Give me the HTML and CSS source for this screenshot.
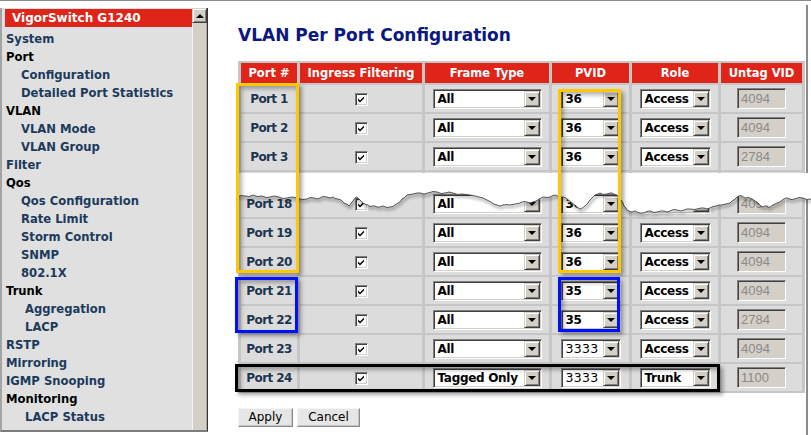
FILE: index.html
```html
<!DOCTYPE html>
<html>
<head>
<meta charset="utf-8">
<title>VLAN Per Port Configuration</title>
<link rel="stylesheet" href="styles.css">
</head>
<body>
<div class="page">
  <div class="topline"></div>
  <div class="layout">
    <aside class="sidebar">
      <div class="menu">
        <div class="brand">VigorSwitch G1240</div>
        <ul class="nav">
          <li>System</li>
          <li class="cat">Port</li>
          <li class="sub">Configuration</li>
          <li class="sub">Detailed Port Statistics</li>
          <li class="cat">VLAN</li>
          <li class="sub">VLAN Mode</li>
          <li class="sub">VLAN Group</li>
          <li>Filter</li>
          <li class="cat">Qos</li>
          <li class="sub">Qos Configuration</li>
          <li class="sub">Rate Limit</li>
          <li class="sub">Storm Control</li>
          <li class="sub">SNMP</li>
          <li class="sub">802.1X</li>
          <li class="cat">Trunk</li>
          <li class="sub2">Aggregation</li>
          <li class="sub2">LACP</li>
          <li>RSTP</li>
          <li>Mirroring</li>
          <li>IGMP Snooping</li>
          <li class="cat">Monitoring</li>
          <li class="sub2">LACP Status</li>
          <li class="sub2">RSTP Status</li>
        </ul>
      </div>
      <div class="scrollbar">
        <div class="sb-up"></div>
        <div class="sb-track"></div>
      </div>
    </aside>

    <main class="main">
      <h1 class="title">VLAN Per Port Configuration</h1>
      <table class="grid">
        <colgroup>
          <col class="c-port"><col class="c-ing"><col class="c-frame"><col class="c-pvid"><col class="c-role"><col class="c-vid">
        </colgroup>
        <thead>
          <tr><th>Port #</th><th>Ingress Filtering</th><th>Frame Type</th><th>PVID</th><th>Role</th><th>Untag VID</th></tr>
        </thead>
        <tbody>
          <tr>
            <td class="port">Port 1</td>
            <td><span class="chk"><svg viewBox="0 0 11 11" width="11" height="11"><path d="M2 4.5 L4 6.5 L8 2.5 V4.5 L4 8.5 L2 6.5Z" fill="#000"/></svg></span></td>
            <td><span class="sel w-frame"><span class="sel-text">All</span><span class="dd"></span></span></td>
            <td><span class="sel w-pvid"><span class="sel-text">36</span><span class="dd"></span></span></td>
            <td><span class="sel w-role"><span class="sel-text">Access</span><span class="dd"></span></span></td>
            <td><span class="vid">4094</span></td>
          </tr>
          <tr>
            <td class="port">Port 2</td>
            <td><span class="chk"><svg viewBox="0 0 11 11" width="11" height="11"><path d="M2 4.5 L4 6.5 L8 2.5 V4.5 L4 8.5 L2 6.5Z" fill="#000"/></svg></span></td>
            <td><span class="sel w-frame"><span class="sel-text">All</span><span class="dd"></span></span></td>
            <td><span class="sel w-pvid"><span class="sel-text">36</span><span class="dd"></span></span></td>
            <td><span class="sel w-role"><span class="sel-text">Access</span><span class="dd"></span></span></td>
            <td><span class="vid">4094</span></td>
          </tr>
          <tr>
            <td class="port">Port 3</td>
            <td><span class="chk"><svg viewBox="0 0 11 11" width="11" height="11"><path d="M2 4.5 L4 6.5 L8 2.5 V4.5 L4 8.5 L2 6.5Z" fill="#000"/></svg></span></td>
            <td><span class="sel w-frame"><span class="sel-text">All</span><span class="dd"></span></span></td>
            <td><span class="sel w-pvid"><span class="sel-text">36</span><span class="dd"></span></span></td>
            <td><span class="sel w-role"><span class="sel-text">Access</span><span class="dd"></span></span></td>
            <td><span class="vid">2784</span></td>
          </tr>
          <tr class="spacer"><td></td><td></td><td></td><td></td><td></td><td></td></tr>
          <tr>
            <td class="port">Port 18</td>
            <td><span class="chk"><svg viewBox="0 0 11 11" width="11" height="11"><path d="M2 4.5 L4 6.5 L8 2.5 V4.5 L4 8.5 L2 6.5Z" fill="#000"/></svg></span></td>
            <td><span class="sel w-frame"><span class="sel-text">All</span><span class="dd"></span></span></td>
            <td><span class="sel w-pvid"><span class="sel-text">36</span><span class="dd"></span></span></td>
            <td><span class="sel w-role"><span class="sel-text">Access</span><span class="dd"></span></span></td>
            <td><span class="vid">4094</span></td>
          </tr>
          <tr>
            <td class="port">Port 19</td>
            <td><span class="chk"><svg viewBox="0 0 11 11" width="11" height="11"><path d="M2 4.5 L4 6.5 L8 2.5 V4.5 L4 8.5 L2 6.5Z" fill="#000"/></svg></span></td>
            <td><span class="sel w-frame"><span class="sel-text">All</span><span class="dd"></span></span></td>
            <td><span class="sel w-pvid"><span class="sel-text">36</span><span class="dd"></span></span></td>
            <td><span class="sel w-role"><span class="sel-text">Access</span><span class="dd"></span></span></td>
            <td><span class="vid">4094</span></td>
          </tr>
          <tr>
            <td class="port">Port 20</td>
            <td><span class="chk"><svg viewBox="0 0 11 11" width="11" height="11"><path d="M2 4.5 L4 6.5 L8 2.5 V4.5 L4 8.5 L2 6.5Z" fill="#000"/></svg></span></td>
            <td><span class="sel w-frame"><span class="sel-text">All</span><span class="dd"></span></span></td>
            <td><span class="sel w-pvid"><span class="sel-text">36</span><span class="dd"></span></span></td>
            <td><span class="sel w-role"><span class="sel-text">Access</span><span class="dd"></span></span></td>
            <td><span class="vid">4094</span></td>
          </tr>
          <tr>
            <td class="port">Port 21</td>
            <td><span class="chk"><svg viewBox="0 0 11 11" width="11" height="11"><path d="M2 4.5 L4 6.5 L8 2.5 V4.5 L4 8.5 L2 6.5Z" fill="#000"/></svg></span></td>
            <td><span class="sel w-frame"><span class="sel-text">All</span><span class="dd"></span></span></td>
            <td><span class="sel w-pvid"><span class="sel-text">35</span><span class="dd"></span></span></td>
            <td><span class="sel w-role"><span class="sel-text">Access</span><span class="dd"></span></span></td>
            <td><span class="vid">4094</span></td>
          </tr>
          <tr>
            <td class="port">Port 22</td>
            <td><span class="chk"><svg viewBox="0 0 11 11" width="11" height="11"><path d="M2 4.5 L4 6.5 L8 2.5 V4.5 L4 8.5 L2 6.5Z" fill="#000"/></svg></span></td>
            <td><span class="sel w-frame"><span class="sel-text">All</span><span class="dd"></span></span></td>
            <td><span class="sel w-pvid"><span class="sel-text">35</span><span class="dd"></span></span></td>
            <td><span class="sel w-role"><span class="sel-text">Access</span><span class="dd"></span></span></td>
            <td><span class="vid">2784</span></td>
          </tr>
          <tr>
            <td class="port">Port 23</td>
            <td><span class="chk"><svg viewBox="0 0 11 11" width="11" height="11"><path d="M2 4.5 L4 6.5 L8 2.5 V4.5 L4 8.5 L2 6.5Z" fill="#000"/></svg></span></td>
            <td><span class="sel w-frame"><span class="sel-text">All</span><span class="dd"></span></span></td>
            <td><span class="sel w-pvid"><span class="sel-text light">3333</span><span class="dd"></span></span></td>
            <td><span class="sel w-role"><span class="sel-text">Access</span><span class="dd"></span></span></td>
            <td><span class="vid">4094</span></td>
          </tr>
          <tr>
            <td class="port">Port 24</td>
            <td><span class="chk"><svg viewBox="0 0 11 11" width="11" height="11"><path d="M2 4.5 L4 6.5 L8 2.5 V4.5 L4 8.5 L2 6.5Z" fill="#000"/></svg></span></td>
            <td><span class="sel w-frame"><span class="sel-text">Tagged Only</span><span class="dd"></span></span></td>
            <td><span class="sel w-pvid"><span class="sel-text light">3333</span><span class="dd"></span></span></td>
            <td><span class="sel w-role"><span class="sel-text">Trunk</span><span class="dd"></span></span></td>
            <td><span class="vid">1100</span></td>
          </tr>
        </tbody>
      </table>
      <div class="actions">
        <button class="btn btn-apply">Apply</button>
        <button class="btn btn-cancel">Cancel</button>
      </div>
    </main>
  </div>

  <svg class="tear" viewBox="0 0 574 45" width="574" height="45">
    <defs>
      <filter id="tearblur" x="-5%" y="-100%" width="110%" height="300%">
        <feGaussianBlur stdDeviation="1.6"/>
      </filter>
    </defs>
    <polyline class="tear-shadow" filter="url(#tearblur)" points="0,24 4,22.5 8,23 12,23.5 16,22 20,23.5 25,23 29,24.5 33,24 37,23 42,24 46,25.5 50,25 55,24 60,25 65,26.5 70,26 73,24.5 77,25 80,26 83,25 86,23.5 90,24 93,25 96,24 98,25.5 101,26 104,27 106,29 108,30.5 110,31 112,33 113,32 115,29 116,28 118,25 120,24 122,26 123,27 125,29 126,30 129,31.5 131,32 133,33.5 135,33 138,33 140,34 143,34 146,33 150,34.5 153,34 156,33.5 158,32 161,30 163,29 165,26 167,25 169,23 170,22 173,21.5 176,21 180,20 183,20 187,21 191,20 196,18.5 200,19 204,20.5 208,20 212,19 216,20 221,21.5 225,21 229,21.5 233,22 238,23 242,24 246,25 250,27 253,28.5 255,30 258,31.5 260,32 263,33 266,32 270,31.5 273,32 276,31.5 278,31 281,30.5 283,30 287,28.5 290,29 293,30 296,29 299,28 301,27 304,25 306,24 310,24.5 313,24 316,22.5 319,22 321,23.5 323,24 326,24 329,25 332,27.5 335,30 338,32 340,34 342,35.5 344,36 346,34.5 348,33 351,30 353,27 356,24 358,22 361,21 363,20 366,21.5 370,21 373,20 375,20 378,21.5 380,22 382,25 384,27 386,30 387,33 389,35 390,37 393,38.5 395,39 398,38 400,39 403,40 406,40 410,38.5 413,38 417,39.5 420,39 424,38 427,38 430,39 433,38 437,36.5 440,37 444,38 447,37 450,36 453,36 457,36.5 460,36 464,35 467,35 470,36 473,35 476,33.5 479,33 482,32 485,32 489,31 493,30 495,28 497,27 499,25 500,24 503,22.5 505,23 507,24.5 509,25 511,24.5 513,25 516,26.5 518,28 520,29 522,31 524,33 526,34 528,33 530,33 532,34.5 533,34 535,32.5 536,32 538,31 540,30 542,29.5 544,28 546,26.5 547,26 549,25 550,25 554,26.5 558,26 562,24.5 566,25 570,26.5 574,26"/>
    <polygon class="tear-fill" points="0,24 4,22.5 8,23 12,23.5 16,22 20,23.5 25,23 29,24.5 33,24 37,23 42,24 46,25.5 50,25 55,24 60,25 65,26.5 70,26 73,24.5 77,25 80,26 83,25 86,23.5 90,24 93,25 96,24 98,25.5 101,26 104,27 106,29 108,30.5 110,31 112,33 113,32 115,29 116,28 118,25 120,24 122,26 123,27 125,29 126,30 129,31.5 131,32 133,33.5 135,33 138,33 140,34 143,34 146,33 150,34.5 153,34 156,33.5 158,32 161,30 163,29 165,26 167,25 169,23 170,22 173,21.5 176,21 180,20 183,20 187,21 191,20 196,18.5 200,19 204,20.5 208,20 212,19 216,20 221,21.5 225,21 229,21.5 233,22 238,23 242,24 246,25 250,27 253,28.5 255,30 258,31.5 260,32 263,33 266,32 270,31.5 273,32 276,31.5 278,31 281,30.5 283,30 287,28.5 290,29 293,30 296,29 299,28 301,27 304,25 306,24 310,24.5 313,24 316,22.5 319,22 321,23.5 323,24 326,24 329,25 332,27.5 335,30 338,32 340,34 342,35.5 344,36 346,34.5 348,33 351,30 353,27 356,24 358,22 361,21 363,20 366,21.5 370,21 373,20 375,20 378,21.5 380,22 382,25 384,27 386,30 387,33 389,35 390,37 393,38.5 395,39 398,38 400,39 403,40 406,40 410,38.5 413,38 417,39.5 420,39 424,38 427,38 430,39 433,38 437,36.5 440,37 444,38 447,37 450,36 453,36 457,36.5 460,36 464,35 467,35 470,36 473,35 476,33.5 479,33 482,32 485,32 489,31 493,30 495,28 497,27 499,25 500,24 503,22.5 505,23 507,24.5 509,25 511,24.5 513,25 516,26.5 518,28 520,29 522,31 524,33 526,34 528,33 530,33 532,34.5 533,34 535,32.5 536,32 538,31 540,30 542,29.5 544,28 546,26.5 547,26 549,25 550,25 554,26.5 558,26 562,24.5 566,25 570,26.5 574,26 574,0 0,0"/>
    <polyline class="tear-line" points="0,24 4,22.5 8,23 12,23.5 16,22 20,23.5 25,23 29,24.5 33,24 37,23 42,24 46,25.5 50,25 55,24 60,25 65,26.5 70,26 73,24.5 77,25 80,26 83,25 86,23.5 90,24 93,25 96,24 98,25.5 101,26 104,27 106,29 108,30.5 110,31 112,33 113,32 115,29 116,28 118,25 120,24 122,26 123,27 125,29 126,30 129,31.5 131,32 133,33.5 135,33 138,33 140,34 143,34 146,33 150,34.5 153,34 156,33.5 158,32 161,30 163,29 165,26 167,25 169,23 170,22 173,21.5 176,21 180,20 183,20 187,21 191,20 196,18.5 200,19 204,20.5 208,20 212,19 216,20 221,21.5 225,21 229,21.5 233,22 238,23 242,24 246,25 250,27 253,28.5 255,30 258,31.5 260,32 263,33 266,32 270,31.5 273,32 276,31.5 278,31 281,30.5 283,30 287,28.5 290,29 293,30 296,29 299,28 301,27 304,25 306,24 310,24.5 313,24 316,22.5 319,22 321,23.5 323,24 326,24 329,25 332,27.5 335,30 338,32 340,34 342,35.5 344,36 346,34.5 348,33 351,30 353,27 356,24 358,22 361,21 363,20 366,21.5 370,21 373,20 375,20 378,21.5 380,22 382,25 384,27 386,30 387,33 389,35 390,37 393,38.5 395,39 398,38 400,39 403,40 406,40 410,38.5 413,38 417,39.5 420,39 424,38 427,38 430,39 433,38 437,36.5 440,37 444,38 447,37 450,36 453,36 457,36.5 460,36 464,35 467,35 470,36 473,35 476,33.5 479,33 482,32 485,32 489,31 493,30 495,28 497,27 499,25 500,24 503,22.5 505,23 507,24.5 509,25 511,24.5 513,25 516,26.5 518,28 520,29 522,31 524,33 526,34 528,33 530,33 532,34.5 533,34 535,32.5 536,32 538,31 540,30 542,29.5 544,28 546,26.5 547,26 549,25 550,25 554,26.5 558,26 562,24.5 566,25 570,26.5 574,26"/>
  </svg>

  <div class="hl hl-yellow hl-port-a"></div>
  <div class="hl hl-yellow hl-pvid-a"></div>
  <div class="hl hl-blue hl-port-b"></div>
  <div class="hl hl-blue hl-pvid-b"></div>
  <div class="hl hl-black hl-row24"></div>
</div>
</body>
</html>
```

FILE: styles.css
```css
* { box-sizing: border-box; }

html, body {
  margin: 0;
  padding: 0;
}

body {
  width: 811px;
  height: 435px;
  overflow: hidden;
  background: #fff;
  font-family: "DejaVu Sans", Verdana, sans-serif;
}

.page {
  position: relative;
  width: 811px;
  height: 435px;
  overflow: hidden;
}

.topline {
  height: 1px;
  background: #8c8c8c;
}

.layout {
  display: flex;
  align-items: flex-start;
}

/* ---------- Sidebar ---------- */
.sidebar {
  width: 208px;
  height: 424px;
  margin-top: 7px;
  display: flex;
  border-left: 2px solid #a4a4a4;
  border-right: 1px solid #333;
  border-bottom: 2px solid #7c7c7c;
}

.menu {
  width: 190px;
  background: #e0e0e0;
  overflow: hidden;
  padding-top: 1px;
}

.brand {
  margin-left: 3px;
  height: 18px;
  background: #df2419;
  color: #fff;
  font-weight: bold;
  font-size: 12px;
  line-height: 19px;
  padding-left: 7px;
  margin-bottom: 2px;
  white-space: nowrap;
}

.nav {
  list-style: none;
  margin: 0;
  padding: 0;
}

.nav li {
  height: 18px;
  line-height: 20px;
  font-size: 11.6px;
  font-weight: bold;
  white-space: nowrap;
  color: #1c3a5c;
  padding-left: 4px;
}

.nav .cat { color: #000; }
.nav .sub { padding-left: 19px; }
.nav .sub2 { padding-left: 23px; }

.scrollbar {
  width: 15px;
  height: 100%;
  display: flex;
  flex-direction: column;
}

.sb-up {
  height: 15px;
  background: #d4d0c8;
  border: 1px solid;
  border-color: #d4d0c8 #404040 #404040 #d4d0c8;
  box-shadow: inset 1px 1px 0 #fff, inset -1px -1px 0 #808080;
  display: flex;
  align-items: center;
  justify-content: center;
}

.sb-up::after {
  content: "";
  border-left: 4px solid transparent;
  border-right: 4px solid transparent;
  border-bottom: 4px solid #000;
}

.sb-track {
  flex: 1;
  background: #d4d0c8;
  border-left: 1px solid #f4f4f4;
  border-right: 1px solid #a8a8a8;
}

/* ---------- Main ---------- */
.main {
  flex: 1;
  margin-top: 4px;
  margin-right: 3px;
  height: 430px;
  border-right: 2px solid #8a8a8a;
  padding: 20px 0 0 30px;
}

.title {
  margin: 0;
  font-size: 17px;
  line-height: 20px;
  font-weight: bold;
  color: #0b1880;
  white-space: nowrap;
}

.grid {
  margin-top: 16px;
  border-collapse: separate;
  border-spacing: 3px 2px;
  background: #c6c6c6;
  table-layout: fixed;
  width: 567px;
}

.c-port { width: 56px; }
.c-ing { width: 122px; }
.c-frame { width: 124px; }
.c-pvid { width: 77px; }
.c-role { width: 86px; }
.c-vid { width: 81px; }

.grid th {
  height: 20px;
  padding: 0;
  background: #df2419;
  color: #fff;
  font-size: 11.5px;
  font-weight: bold;
  text-align: center;
  white-space: nowrap;
}

.grid td {
  height: 27px;
  padding: 0;
  background: #dcdcdc;
  text-align: center;
  vertical-align: middle;
  line-height: 16px;
  white-space: nowrap;
}

.grid .spacer td { height: 16px; }

.grid td.port {
  color: #1c3550;
  font-size: 12px;
  font-weight: bold;
  letter-spacing: -0.6px;
}

/* checkbox */
.chk {
  display: inline-block;
  width: 13px;
  height: 13px;
  vertical-align: middle;
  background: #fff;
  border: 1px solid;
  border-color: #808080 #fff #fff #808080;
  box-shadow: inset 1px 1px 0 #404040, inset -1px -1px 0 #d4d0c8;
  position: relative;
}

.chk svg {
  display: block;
  position: absolute;
  left: 0;
  top: 0;
}

/* select */
.sel {
  display: inline-flex;
  align-items: center;
  vertical-align: middle;
  height: 20px;
  padding: 1px;
  background: #fff;
  border: 1px solid;
  border-color: #808080 #fff #fff #808080;
  box-shadow: inset 1px 1px 0 #404040, inset -1px -1px 0 #d4d0c8;
  text-align: left;
}

.w-frame { width: 109px; }
.w-pvid { width: 60px; }
.w-role { width: 71px; }

.sel-text {
  flex: 1;
  padding-left: 3px;
  font-size: 12px;
  font-weight: bold;
  letter-spacing: -0.3px;
  color: #000;
  line-height: 16px;
  overflow: hidden;
}

.sel-text.light {
  font-weight: normal;
  font-size: 12.5px;
  letter-spacing: 0.3px;
}

.dd {
  flex: none;
  width: 16px;
  height: 16px;
  background: #d4d0c8;
  border: 1px solid;
  border-color: #d4d0c8 #404040 #404040 #d4d0c8;
  box-shadow: inset 1px 1px 0 #fff, inset -1px -1px 0 #808080;
  display: flex;
  align-items: center;
  justify-content: center;
}

.dd::after {
  content: "";
  border-left: 4px solid transparent;
  border-right: 4px solid transparent;
  border-top: 4px solid #000;
  margin-top: 1px;
}

/* disabled text input */
.vid {
  display: inline-block;
  vertical-align: middle;
  width: 49px;
  height: 21px;
  padding-left: 3px;
  text-align: left;
  background: #d4d0c8;
  border: 1px solid;
  border-color: #808080 #fff #fff #808080;
  box-shadow: inset 1px 1px 0 #404040, inset -1px -1px 0 #d4d0c8;
  font-family: "Liberation Sans", Arial, sans-serif;
  font-size: 13px;
  line-height: 19px;
  color: #8a8a8a;
}

/* buttons */
.actions {
  margin-top: 15px;
  display: flex;
  gap: 4px;
}

.btn {
  height: 19px;
  padding: 0;
  font-family: "DejaVu Sans", Verdana, sans-serif;
  font-size: 12px;
  line-height: 17px;
  color: #000;
  background: #e6e6e6;
  border: 1px solid;
  border-color: #f4f4f4 #8c8c8c #8c8c8c #f4f4f4;
  box-shadow: inset -1px -1px 0 #c4c4c4;
}

.btn-apply { width: 55px; }
.btn-cancel { width: 63px; }

/* ---------- Overlays ---------- */
.tear {
  position: absolute;
  left: 237px;
  top: 173px;
  width: 574px;
  height: 45px;
  overflow: visible;
}

.tear-shadow {
  fill: none;
  stroke: #000;
  stroke-opacity: 0.35;
  stroke-width: 2;
  transform: translate(1px, 2px);
}

.tear-fill {
  fill: #fff;
}

.tear-line {
  fill: none;
  stroke: #444;
  stroke-width: 0.9;
}

.hl {
  position: absolute;
  border: 3px solid;
  box-shadow: 3px 3px 4px rgba(0, 0, 0, 0.35), inset 3px 3px 4px rgba(0, 0, 0, 0.3);
}

.hl-yellow { border-color: #ffc800; }
.hl-blue { border-color: #0010ff; }
.hl-black { border-color: #000; }

.hl-port-a { left: 236px; top: 83px; width: 63px; height: 190px; }
.hl-pvid-a { left: 558px; top: 89px; width: 63px; height: 184px; }
.hl-port-b { left: 235px; top: 277px; width: 63px; height: 56px; }
.hl-pvid-b { left: 558px; top: 277px; width: 62px; height: 55px; }
.hl-row24 { left: 235px; top: 364px; width: 485px; height: 28px; }
```
